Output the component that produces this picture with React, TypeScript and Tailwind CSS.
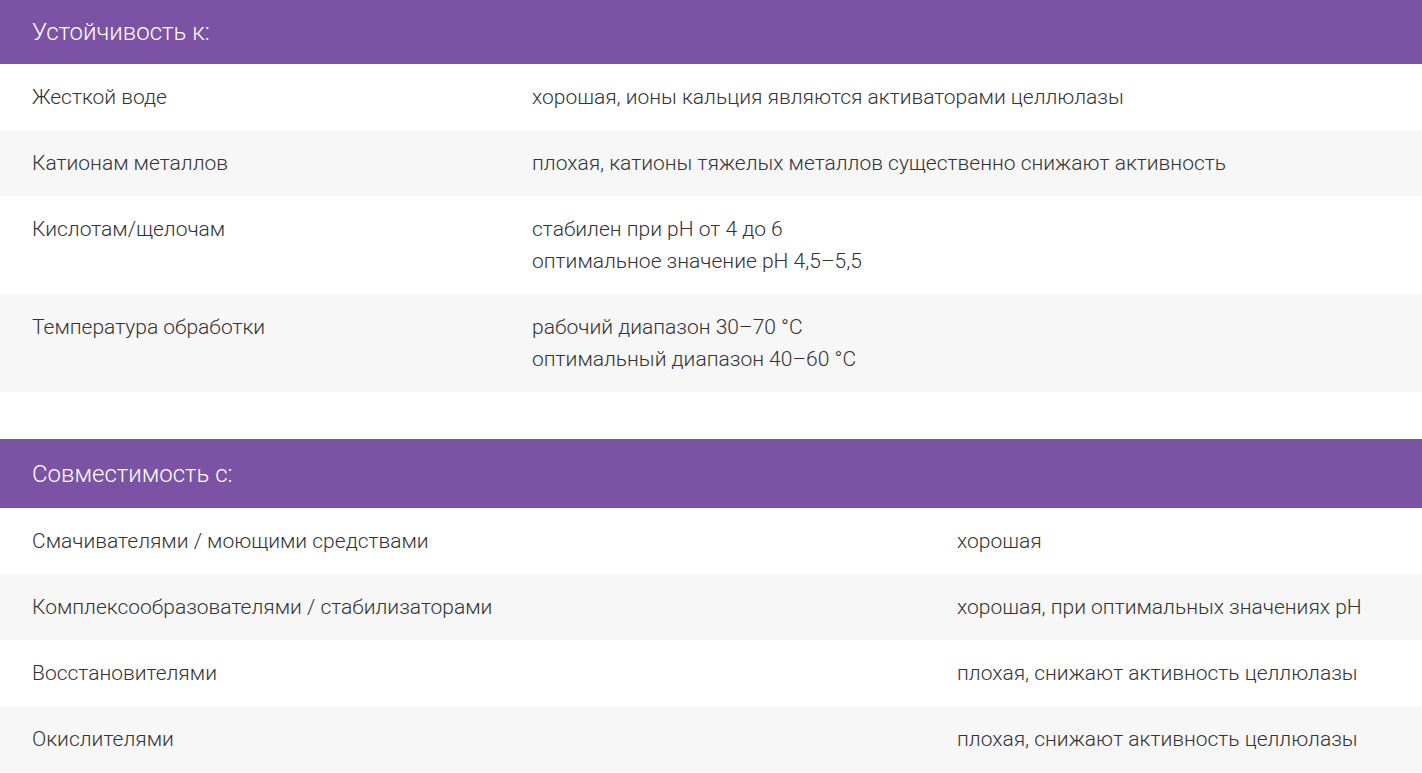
const resistance: Array<[string, string[]]> = [
  ['Жесткой воде', ['хорошая, ионы кальция являются активаторами целлюлазы']],
  ['Катионам металлов', ['плохая, катионы тяжелых металлов существенно снижают активность']],
  ['Кислотам/щелочам', ['стабилен при pH от 4 до 6', 'оптимальное значение pH 4,5–5,5']],
  ['Температура обработки', ['рабочий диапазон 30–70 °C', 'оптимальный диапазон 40–60 °C']],
];

const compatibility: Array<[string, string[]]> = [
  ['Смачивателями / моющими средствами', ['хорошая']],
  ['Комплексообразователями / стабилизаторами', ['хорошая, при оптимальных значениях pH']],
  ['Восстановителями', ['плохая, снижают активность целлюлазы']],
  ['Окислителями', ['плохая, снижают активность целлюлазы']],
];

const PropTable = ({
  title,
  rows,
  cols,
  headH,
}: {
  title: string;
  rows: Array<[string, string[]]>;
  cols: string;
  headH: string;
}) => (
  <div>
    <div className={`bg-[#7b52a4] text-white text-[24px] font-light px-8 flex items-center ${headH}`}>
      {title}
    </div>
    {rows.map(([name, values], i) => (
      <div
        key={name}
        className={`grid ${cols} py-[17px] text-[21px] font-light leading-[32px] text-[#333333] ${
          i % 2 === 1 ? 'bg-[#f7f7f7]' : 'bg-white'
        }`}
      >
        <div className="px-8">{name}</div>
        <div className="px-8">
          {values.map((v) => (
            <div key={v}>{v}</div>
          ))}
        </div>
      </div>
    ))}
  </div>
);

export default function App() {
  return (
    <div className="w-[1422px] bg-white font-['Roboto',sans-serif]">
      <PropTable title="Устойчивость к:" rows={resistance} cols="grid-cols-[500px_1fr]" headH="h-[64px]" />
      <div className="h-[47px]" />
      <PropTable title="Совместимость с:" rows={compatibility} cols="grid-cols-[925px_1fr]" headH="h-[69px]" />
    </div>
  );
}
